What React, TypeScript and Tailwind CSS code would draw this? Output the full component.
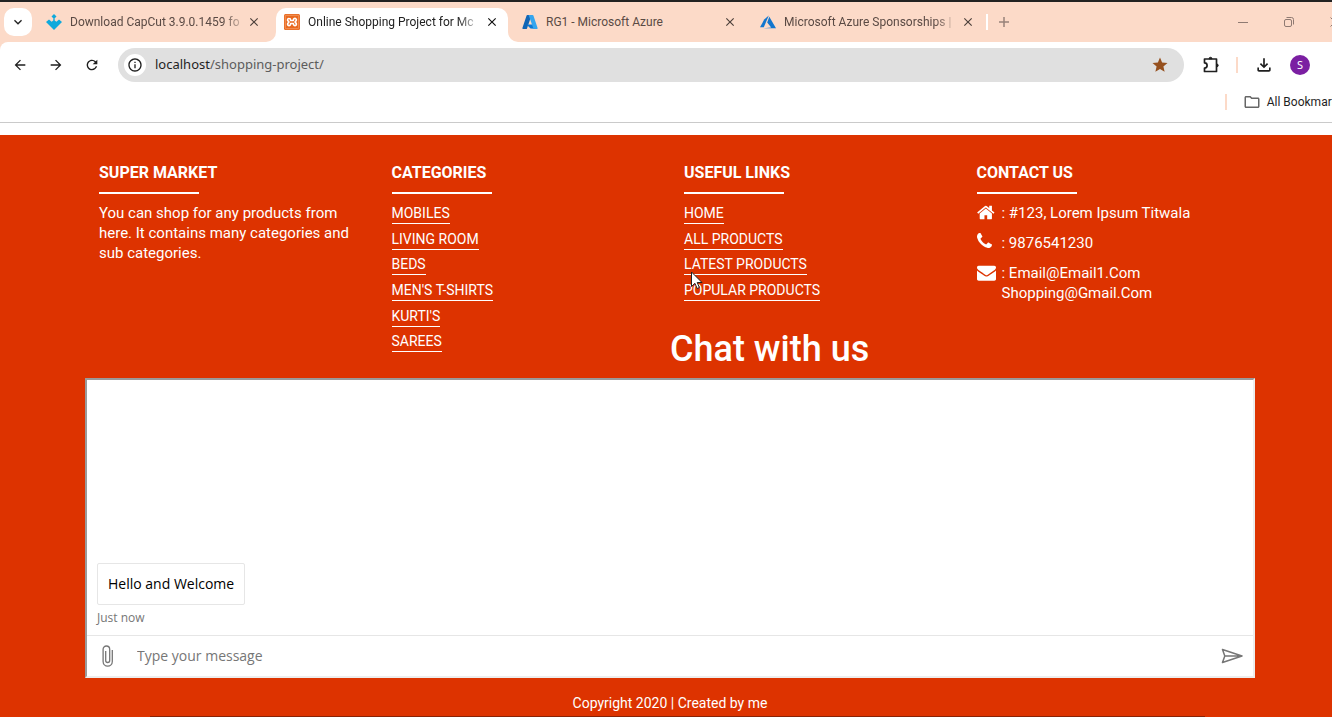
import React from 'react';
import {
  MdArrowBack,
  MdArrowForward,
  MdRefresh,
  MdInfoOutline,
  MdStar,
  MdOutlineFileDownload,
  MdOutlineFolder,
  MdKeyboardArrowDown,
  MdClose,
} from 'react-icons/md';

function DownloadSiteIcon() {
  return (
    <svg viewBox="0 0 16 16" className="size-4" fill="#0fa9dc">
      <path d="M8 0l2.500 2.500L8 5 5.500 2.500z" />
      <path d="M5.600 7.800L7.300 6.500V4.500h1.400v2l1.700 1.300 2.600-2.300 3 2.500-8 8-8-8 3-2.500z" />
    </svg>
  );
}

function XamppIcon() {
  return (
    <svg viewBox="0 0 16 16" className="size-4">
      <rect width="16" height="16" rx="1.500" fill="#e9691f" />
      <rect x="1.300" y="1.300" width="13.400" height="13.400" rx="1" fill="none" stroke="#f6b183" strokeWidth=".6" />
      <path
        d="M5.200 4.500a1.400 1.400 0 0 1 1.400 1.400v.6h2.800v-.6a1.500 1.500 0 1 1 2.600 1L11 8l1 1.100a1.500 1.500 0 1 1-2.600 1v-.6H6.600v.6a1.500 1.500 0 1 1-2.600-1L5 8 4 6.900a1.400 1.400 0 0 1 1.200-2.400z"
        fill="none"
        stroke="#fff"
        strokeWidth="1.600"
        strokeLinejoin="round"
      />
    </svg>
  );
}

function AzureIcon() {
  return (
    <svg viewBox="0 0 16 16" className="size-4">
      <path d="M5.400 1h4.200L5 14.400a.9.9 0 0 1-.8.6H1.200a.8.8 0 0 1-.8-1L4.600 1.600A.9.9 0 0 1 5.400 1z" fill="#1165b5" />
      <path d="M4.500 10.400h7l1 4.400-4-.2z" fill="#0a78d4" />
      <path d="M6.600 1h4a.9.9 0 0 1 .8.6L15.600 14a.8.8 0 0 1-.8 1h-4.200a.9.9 0 0 0 .6-1z" fill="#34a5ee" />
    </svg>
  );
}

function AzureClassicIcon() {
  return (
    <svg viewBox="0 0 16 16" className="size-4" fill="#1276ce">
      <path d="M8.800 1.600L4.200 5.600 0 13.200h3.800z" />
      <path d="M9.300 2.700L7.200 8.600l4 5-7.700.7H16z" />
    </svg>
  );
}

const tabs = [
  { title: 'Download CapCut 3.9.0.1459 fo', icon: <DownloadSiteIcon />, fade: true, active: false },
  { title: 'Online Shopping Project for Mc', icon: <XamppIcon />, fade: true, active: true },
  { title: 'RG1 - Microsoft Azure', icon: <AzureIcon />, fade: false, active: false },
  { title: 'Microsoft Azure Sponsorships |', icon: <AzureClassicIcon />, fade: true, active: false },
];

function Tab({ title, icon, fade, active }: (typeof tabs)[number]) {
  return (
    <div className="relative flex h-[34px] w-[238px] shrink-0">
      {active && (
        <>
          <span className="absolute inset-y-0 left-0 right-1.5 rounded-t-[10px] bg-white" />
          <span className="absolute -left-2.5 bottom-0 size-2.5 bg-white">
            <span className="block size-2.5 rounded-br-[10px] bg-[#fcdac8]" />
          </span>
          <span className="absolute -right-1 bottom-0 size-2.5 bg-white">
            <span className="block size-2.5 rounded-bl-[10px] bg-[#fcdac8]" />
          </span>
        </>
      )}
      <div className="relative flex min-w-0 flex-1 items-center pb-1.5 pl-2">
        <span className="mr-2 shrink-0">{icon}</span>
        <span className="w-[177px] shrink-0 whitespace-nowrap font-['Roboto',sans-serif] text-[12px]">
          <span
            className={`${active ? 'text-[#222]' : 'text-[#5a4a44]'} ${
              fade ? '[mask-image:linear-gradient(to_right,black_90%,rgb(0_0_0/0.3))]' : ''
            }`}
          >
            {title}
          </span>
        </span>
        <button aria-label={`Close ${title}`} className="shrink-0">
          <MdClose className={`size-3.5 ${active ? 'text-[#111]' : 'text-[#4d403b]'}`} />
        </button>
      </div>
    </div>
  );
}

function BrowserBar() {
  return (
    <header className="border-b border-[#cacaca] bg-[#fcdac8] font-['Noto_Sans',sans-serif]">
      <div className="h-0.5 bg-[#222]" />
      <div className="flex h-10 items-end">
        <button aria-label="Search tabs" className="mb-1.5 ml-1 mr-1.5 flex size-7 shrink-0 items-center justify-center rounded-[10px] bg-white">
          <MdKeyboardArrowDown className="size-4 text-[#222]" />
        </button>
        {tabs.map((tab) => (
          <Tab key={tab.title} {...tab} />
        ))}
        <div className="flex h-[34px] flex-1 items-center pb-1.5">
          <span className="-ml-1 h-4 w-0.5 bg-white" />
          <button aria-label="New tab" className="ml-2.5 text-[#97827a]">
            <svg viewBox="0 0 12 12" className="size-3" stroke="currentColor" strokeWidth="1.500">
              <path d="M6 1v10M1 6h10" />
            </svg>
          </button>
          <div className="-mr-px ml-auto flex items-center gap-[34px] text-[#8f7a72]">
            <button aria-label="Minimize">
              <svg viewBox="0 0 12 12" className="size-3" stroke="currentColor">
                <path d="M1 6.500h10" />
              </svg>
            </button>
            <button aria-label="Restore">
              <svg viewBox="0 0 12 12" className="size-3" stroke="currentColor" fill="none">
                <rect x="1.500" y="3.500" width="7" height="7" rx="1.500" />
                <path d="M3.500 1.500h5a2 2 0 0 1 2 2v5" />
              </svg>
            </button>
            <button aria-label="Close window">
              <svg viewBox="0 0 12 12" className="size-3" stroke="currentColor">
                <path d="M1.500 1.500l9 9M10.500 1.500l-9 9" />
              </svg>
            </button>
          </div>
        </div>
      </div>

      <div className="rounded-tl-lg bg-white">
        <div className="flex items-center pt-1.5 text-[#1f1f1f]">
          <button aria-label="Back" className="ml-3">
            <MdArrowBack className="size-4" />
          </button>
          <button aria-label="Forward" className="ml-5">
            <MdArrowForward className="size-4" />
          </button>
          <button aria-label="Reload" className="ml-5 mr-[18px]">
            <MdRefresh className="size-4" />
          </button>
          <div className="flex h-[34px] flex-1 items-center rounded-full bg-[#e0e0e0] pl-1.5 pr-[15px]">
            <button aria-label="Site information" className="flex size-[22px] items-center justify-center rounded-full bg-white">
              <MdInfoOutline className="size-4" />
            </button>
            <a href="#top" className="ml-[9px] flex-1 text-[13px] text-[#5c5c5c]">
              <span className="text-[#1f1f1f]">localhost</span>/shopping-project/
            </a>
            <button aria-label="Bookmark">
              <MdStar className="size-[18px] text-[#96501e]" />
            </button>
          </div>
          <button aria-label="Extensions" className="ml-[18px]">
            <svg viewBox="0 0 18 18" className="size-[18px]" fill="none" stroke="currentColor" strokeWidth="1.700" strokeLinejoin="round">
              <path d="M2.500 3h12v12.500h-12v-3.500a2.500 2.500 0 0 0 0-5.200z" />
              <path d="M7 2.800a1.500 1.500 0 0 1 3 0zM14.800 8a1.400 1.400 0 0 1 0 2.800z" fill="currentColor" strokeWidth="1" />
            </svg>
          </button>
          <span className="ml-4 h-4 w-0.5 bg-[#fcdac8]" />
          <button aria-label="Downloads" className="ml-4">
            <MdOutlineFileDownload className="size-5" />
          </button>
          <button aria-label="Profile" className="ml-4 mr-[30px] size-5 rounded-full bg-[#7b1fa2] text-[11px] leading-5 text-white">
            S
          </button>
        </div>
        <div className="flex h-10 items-center justify-end text-[#1f1f1f]">
          <span className="mr-4 h-4 w-0.5 bg-[#fcdac8]" />
          <button className="-mr-1 flex items-center gap-1.5 whitespace-nowrap font-['Roboto',sans-serif] text-[12px]">
            <MdOutlineFolder className="size-[18px] text-[#666]" />
            All Bookmarks
          </button>
        </div>
      </div>
    </header>
  );
}

const categories = ['MOBILES', 'LIVING ROOM', 'BEDS', "MEN'S T-SHIRTS", "KURTI'S", 'SAREES'];
const usefulLinks = ['HOME', 'ALL PRODUCTS', 'LATEST PRODUCTS', 'POPULAR PRODUCTS'];

function Heading({ children }: { children: React.ReactNode }) {
  return (
    <h3 className="mb-[9px] text-[16px] font-bold leading-5">
      {children}
      <span className="mt-[9px] block h-0.5 w-[100px] bg-white" />
    </h3>
  );
}

function LinkList({ items }: { items: string[] }) {
  return (
    <ul className="grid h-[154px] grid-rows-6 text-[14px] leading-5">
      {items.map((item) => (
        <li key={item}>
          <a href="#top" className="inline-block border-b border-white">
            {item}
          </a>
        </li>
      ))}
    </ul>
  );
}

function ContactIcon({ d }: { d: string }) {
  return (
    <svg viewBox="0 0 1792 1792" className="size-[19px] shrink-0" fill="currentColor">
      <path d={d} />
    </svg>
  );
}

const HOME =
  'M1408 992v480q0 26-19 45t-45 19h-384v-384h-256v384h-384q-26 0-45-19t-19-45v-480q0-1 .5-3t.5-3l575-474 575 474q1 2 1 6zm223-69l-62 74q-8 9-21 11h-3q-13 0-21-7l-692-577-692 577q-12 8-24 7-13-2-21-11l-62-74q-8-10-7-23.5t11-21.5l719-599q32-26 76-26t76 26l244 204v-195q0-14 9-23t23-9h192q14 0 23 9t9 23v408l219 182q10 8 11 21.5t-7 23.5z';
const PHONE =
  'M1408 1112q0 27-10 70.5t-21 68.5q-21 50-122 106-94 51-186 51-27 0-53-3.5t-57.5-12.5-47-14.5-55.5-20.5-49-18q-98-35-175-83-127-79-264-216t-216-264q-48-77-83-175-3-9-18-49t-20.5-55.5-14.5-47-12.5-57.5-3.5-53q0-92 51-186 56-101 106-122 25-11 68.5-21t70.5-10q14 0 21 3 18 6 53 76 11 19 30 54t35 63.5 31 53.5q3 4 17.5 25t21.5 35.5 7 28.5q0 20-28.5 50t-62 55-62 53-28.5 46q0 9 5 22.5t8.5 20.5 14 24 11.5 19q76 137 174 235t235 174q2 1 19 11.5t24 14 20.5 8.5 22.5 5q18 0 46-28.5t53-62 55-62 50-28.5q14 0 28.5 7t35.5 21.5 25 17.5q25 15 53.5 31t63.5 35 54 30q70 35 76 53 3 7 3 21z';
const ENVELOPE =
  'M1792 710v794q0 66-47 113t-113 47h-1472q-66 0-113-47t-47-113v-794q44 49 101 87 362 246 497 345 57 42 92.5 65.5t94.5 48 110 24.5h2q51 0 110-24.5t94.5-48 92.5-65.5q170-123 498-345 57-39 100-87zm0-294q0 79-49 151t-122 123q-376 261-468 325-10 7-42.5 31t-54 38.5-52 32.5-57.5 27-50 9h-2q-23 0-50-9t-57.5-27-52-32.5-54-38.5-42.5-31q-91-64-262-182.5t-205-142.5q-62-42-117-115.5t-55-136.5q0-78 41.5-130t118.5-52h1472q65 0 112.5 47t47.5 113z';

function Chat() {
  return (
    <section className="flex h-[300px] flex-col border-2 border-b-[#ededed] border-l-[#9a9a9a] border-r-[#ededed] border-t-[#9a9a9a] bg-white font-['Open_Sans',sans-serif]">
      <div className="flex flex-1 flex-col items-start justify-end px-2.5 pb-2">
        <p className="rounded-xs border border-[#e6e6e6] px-2.5 py-2.5 text-[14px] leading-5 text-black">Hello and Welcome</p>
        <p className="mt-1 text-[12px] leading-[18px] text-[#767676]">Just now</p>
      </div>
      <form className="flex h-[41px] items-center border-t border-[#e6e6e6]" onSubmit={(e) => e.preventDefault()}>
        <button type="button" aria-label="Attach file" className="flex w-10 justify-center text-[#767676]">
          <svg viewBox="0 0 11 22" className="h-[22px] w-[11px]" fill="none" stroke="currentColor" strokeWidth="1.300">
            <path d="M10.300 5v11.500a4.600 4.600 0 0 1-9.200 0V4.300a3.300 3.300 0 0 1 6.600 0V15.500a2 2 0 0 1-4 0V6" />
          </svg>
        </button>
        <input
          aria-label="Type your message"
          placeholder="Type your message"
          className="ml-2.5 min-w-0 flex-1 text-[14px] text-black outline-none placeholder:text-[#767676]"
        />
        <button type="submit" aria-label="Send" className="mr-2.5 text-[#767676]">
          <svg viewBox="0 0 22 16" className="h-4 w-[22px]" fill="none" stroke="currentColor" strokeWidth="1.500" strokeLinejoin="round">
            <path d="M1.500 1.500L21 8 1.500 14.500 3.800 8zM3.800 8H20" />
          </svg>
        </button>
      </form>
    </section>
  );
}

export default function App() {
  return (
    <div id="top" className="relative min-h-screen overflow-hidden bg-[#dd3300]">
      <div className="-mr-2">
        <BrowserBar />
        <div className="h-3 bg-white" />
        <footer className="px-[85px] pt-7 font-['Roboto',sans-serif] text-[15px] leading-5 text-white">
          <div className="grid grid-cols-4">
            <div className="px-3.5">
              <Heading>SUPER MARKET</Heading>
              <p>You can shop for any products from here. It contains many categories and sub categories.</p>
            </div>
            <div className="px-3.5">
              <Heading>CATEGORIES</Heading>
              <LinkList items={categories} />
            </div>
            <div className="px-3.5">
              <Heading>USEFUL LINKS</Heading>
              <LinkList items={usefulLinks} />
            </div>
            <div className="px-3.5">
              <Heading>CONTACT US</Heading>
              <ul className="flex flex-col gap-2.5">
                <li className="flex gap-1.5"><ContactIcon d={HOME} /><span>: #123, Lorem Ipsum Titwala</span></li>
                <li className="flex gap-1.5"><ContactIcon d={PHONE} /><span>: 9876541230</span></li>
                <li className="flex gap-1.5"><ContactIcon d={ENVELOPE} /><span>: Email@Email1.Com<br />Shopping@Gmail.Com</span></li>
              </ul>
            </div>
          </div>
          <h1 className="-mt-7 mb-[9px] pl-[50%] text-[36px] font-medium leading-10">Chat with us</h1>
          <Chat />
          <p className="mt-[15px] text-center text-[14px]">Copyright 2020 | Created by me</p>
        </footer>
      </div>
      <div className="absolute bottom-0 left-[150px] right-[127px] h-px bg-[#8a2205]" />
      <svg viewBox="0 0 12 19" className="absolute left-[691px] top-[271px] h-[19px] w-3" fill="white" stroke="#222" strokeWidth="1">
        <path d="M.500 1v14.500l3.400-3.200 2.300 5.200 2.200-1-2.200-5h4.800z" />
      </svg>
    </div>
  );
}
